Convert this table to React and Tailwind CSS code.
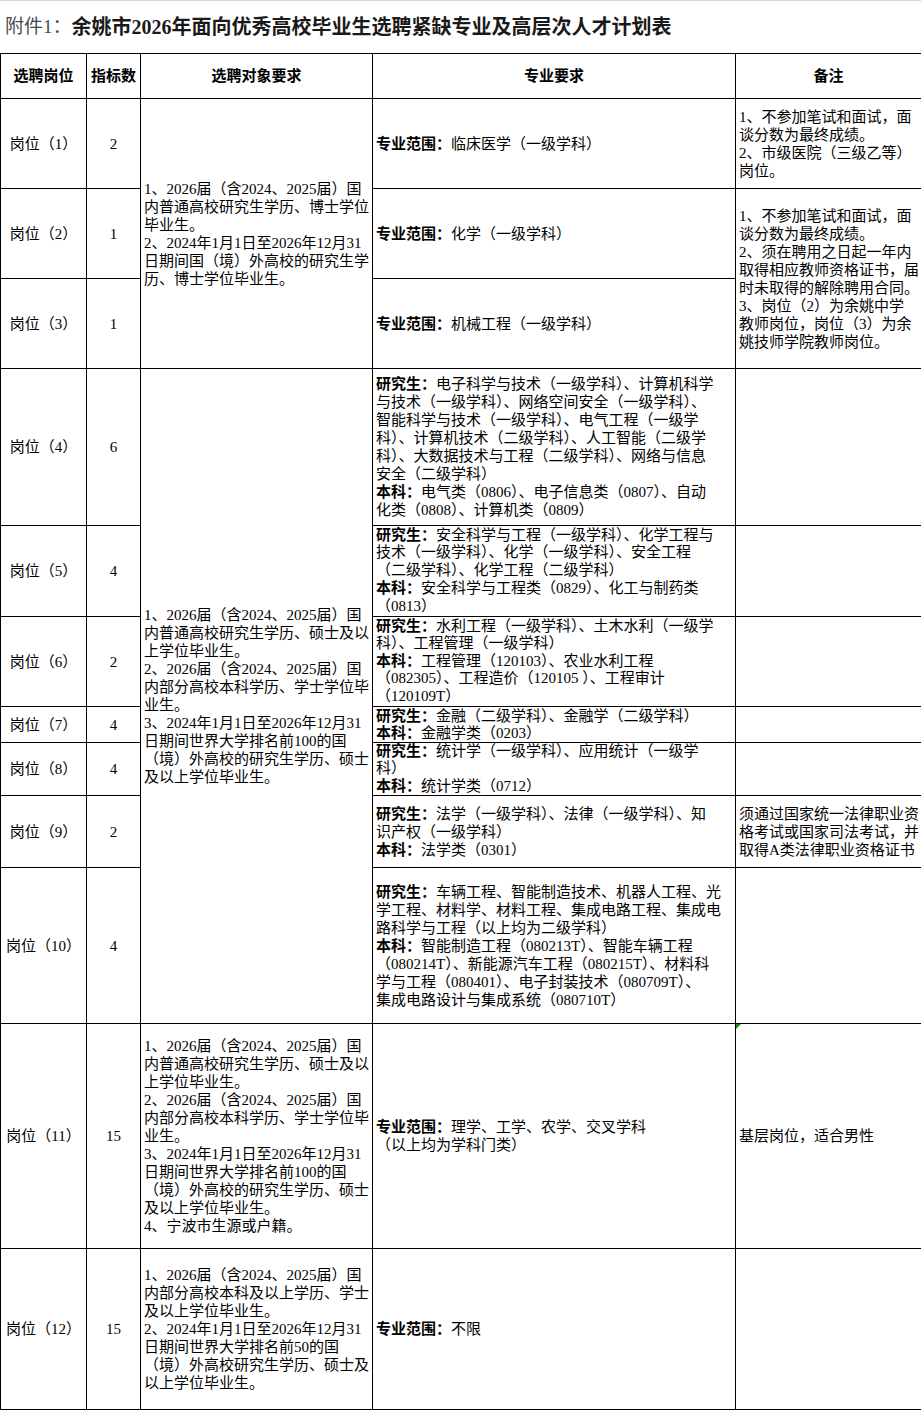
import React from "react";

const FONT = "font-['Liberation_Serif','Noto_Sans_CJK_SC',serif]";

function Lines({ lines, className = "" }) {
  return (
    <div className={"whitespace-nowrap " + className}>
      {lines.map((l, i) => (
        <div key={i}>
          {Array.isArray(l) ? (
            <>
              <span className="font-bold">{l[0]}</span>
              {l[1]}
            </>
          ) : (
            l
          )}
        </div>
      ))}
    </div>
  );
}

const td = "border border-black p-0 align-middle";
const posTd = td + " text-center whitespace-nowrap";
const txtTd = td + " px-[3px] text-left";

const col3a = [
  "1、2026届（含2024、2025届）国",
  "内普通高校研究生学历、博士学位",
  "毕业生。",
  "2、2024年1月1日至2026年12月31",
  "日期间国（境）外高校的研究生学",
  "历、博士学位毕业生。",
];

const col3b = [
  "1、2026届（含2024、2025届）国",
  "内普通高校研究生学历、硕士及以",
  "上学位毕业生。",
  "2、2026届（含2024、2025届）国",
  "内部分高校本科学历、学士学位毕",
  "业生。",
  "3、2024年1月1日至2026年12月31",
  "日期间世界大学排名前100的国",
  "（境）外高校的研究生学历、硕士",
  "及以上学位毕业生。",
];

const col3c = [...col3b, "4、宁波市生源或户籍。"];

const col3d = [
  "1、2026届（含2024、2025届）国",
  "内部分高校本科及以上学历、学士",
  "及以上学位毕业生。",
  "2、2024年1月1日至2026年12月31",
  "日期间世界大学排名前50的国",
  "（境）外高校研究生学历、硕士及",
  "以上学位毕业生。",
];

export default function App() {
  return (
    <div className={"w-[921px] bg-white text-black " + FONT}>
      <div className="h-[53px] border-t border-[#d6d6d6] flex items-center pl-[5px] whitespace-nowrap">
        <span className="text-[19px] text-[#4a4a4a]">附件1：</span>
        <span className="text-[20px] font-bold text-[#1a1a1a]">
          余姚市2026年面向优秀高校毕业生选聘紧缺专业及高层次人才计划表
        </span>
      </div>
      <table className="table-fixed border-collapse w-[921px] text-[15px] leading-[18px]">
        <colgroup>
          <col className="w-[86px]" />
          <col className="w-[54px]" />
          <col className="w-[232px]" />
          <col className="w-[363px]" />
          <col className="w-[186px]" />
        </colgroup>
        <tbody>
          <tr className="h-[45px] font-bold">
            <td className={posTd}>选聘岗位</td>
            <td className={posTd}>指标数</td>
            <td className={posTd}>选聘对象要求</td>
            <td className={posTd}>专业要求</td>
            <td className={posTd}>备注</td>
          </tr>

          <tr className="h-[90px]">
            <td className={posTd}>岗位（1）</td>
            <td className={posTd}>2</td>
            <td rowSpan={3} className={txtTd}>
              <Lines lines={col3a} />
            </td>
            <td className={txtTd}>
              <Lines lines={[["专业范围：", "临床医学（一级学科）"]]} />
            </td>
            <td className={txtTd}>
              <Lines
                lines={[
                  "1、不参加笔试和面试，面",
                  "谈分数为最终成绩。",
                  "2、市级医院（三级乙等）",
                  "岗位。",
                ]}
              />
            </td>
          </tr>
          <tr className="h-[90px]">
            <td className={posTd}>岗位（2）</td>
            <td className={posTd}>1</td>
            <td className={txtTd}>
              <Lines lines={[["专业范围：", "化学（一级学科）"]]} />
            </td>
            <td rowSpan={2} className={txtTd}>
              <Lines
                lines={[
                  "1、不参加笔试和面试，面",
                  "谈分数为最终成绩。",
                  "2、须在聘用之日起一年内",
                  "取得相应教师资格证书，届",
                  "时未取得的解除聘用合同。",
                  "3、岗位（2）为余姚中学",
                  "教师岗位，岗位（3）为余",
                  "姚技师学院教师岗位。",
                ]}
              />
            </td>
          </tr>
          <tr className="h-[90px]">
            <td className={posTd}>岗位（3）</td>
            <td className={posTd}>1</td>
            <td className={txtTd}>
              <Lines lines={[["专业范围：", "机械工程（一级学科）"]]} />
            </td>
          </tr>

          <tr className="h-[157px]">
            <td className={posTd}>岗位（4）</td>
            <td className={posTd}>6</td>
            <td rowSpan={7} className={txtTd}>
              <Lines lines={col3b} />
            </td>
            <td className={txtTd}>
              <Lines
                lines={[
                  ["研究生：", "电子科学与技术（一级学科）、计算机科学"],
                  "与技术（一级学科）、网络空间安全（一级学科）、",
                  "智能科学与技术（一级学科）、电气工程（一级学",
                  "科）、计算机技术（二级学科）、人工智能（二级学",
                  "科）、大数据技术与工程（二级学科）、网络与信息",
                  "安全（二级学科）",
                  ["本科：", "电气类（0806）、电子信息类（0807）、自动"],
                  "化类（0808）、计算机类（0809）",
                ]}
              />
            </td>
            <td className={td}></td>
          </tr>
          <tr className="h-[91px]">
            <td className={posTd}>岗位（5）</td>
            <td className={posTd}>4</td>
            <td className={txtTd}>
              <Lines
                className="leading-[17.8px]"
                lines={[
                  ["研究生：", "安全科学与工程（一级学科）、化学工程与"],
                  "技术（一级学科）、化学（一级学科）、安全工程",
                  "（二级学科）、化学工程（二级学科）",
                  ["本科：", "安全科学与工程类（0829）、化工与制药类"],
                  "（0813）",
                ]}
              />
            </td>
            <td className={td}></td>
          </tr>
          <tr className="h-[90px]">
            <td className={posTd}>岗位（6）</td>
            <td className={posTd}>2</td>
            <td className={txtTd}>
              <Lines
                className="leading-[17.6px]"
                lines={[
                  ["研究生：", "水利工程（一级学科）、土木水利（一级学"],
                  "科）、工程管理（一级学科）",
                  ["本科：", "工程管理（120103）、农业水利工程"],
                  "（082305）、工程造价（120105 ）、工程审计",
                  "（120109T）",
                ]}
              />
            </td>
            <td className={td}></td>
          </tr>
          <tr className="h-[36px]">
            <td className={posTd}>岗位（7）</td>
            <td className={posTd}>4</td>
            <td className={txtTd}>
              <Lines
                className="leading-[17px]"
                lines={[
                  ["研究生：", "金融（二级学科）、金融学（二级学科）"],
                  ["本科：", "金融学类（0203）"],
                ]}
              />
            </td>
            <td className={td}></td>
          </tr>
          <tr className="h-[53px]">
            <td className={posTd}>岗位（8）</td>
            <td className={posTd}>4</td>
            <td className={txtTd}>
              <Lines
                className="leading-[17.3px]"
                lines={[
                  ["研究生：", "统计学（一级学科）、应用统计（一级学"],
                  "科）",
                  ["本科：", "统计学类（0712）"],
                ]}
              />
            </td>
            <td className={td}></td>
          </tr>
          <tr className="h-[72px]">
            <td className={posTd}>岗位（9）</td>
            <td className={posTd}>2</td>
            <td className={txtTd}>
              <Lines
                lines={[
                  ["研究生：", "法学（一级学科）、法律（一级学科）、知"],
                  "识产权（一级学科）",
                  ["本科：", "法学类（0301）"],
                ]}
              />
            </td>
            <td className={txtTd}>
              <Lines
                lines={[
                  "须通过国家统一法律职业资",
                  "格考试或国家司法考试，并",
                  "取得A类法律职业资格证书",
                ]}
              />
            </td>
          </tr>
          <tr className="h-[156px]">
            <td className={posTd}>岗位（10）</td>
            <td className={posTd}>4</td>
            <td className={txtTd}>
              <Lines
                lines={[
                  ["研究生：", "车辆工程、智能制造技术、机器人工程、光"],
                  "学工程、材料学、材料工程、集成电路工程、集成电",
                  "路科学与工程（以上均为二级学科）",
                  ["本科：", "智能制造工程（080213T）、智能车辆工程"],
                  "（080214T）、新能源汽车工程（080215T）、材料科",
                  "学与工程（080401）、电子封装技术（080709T）、",
                  "集成电路设计与集成系统（080710T）",
                ]}
              />
            </td>
            <td className={td}></td>
          </tr>

          <tr className="h-[225px]">
            <td className={posTd}>岗位（11）</td>
            <td className={posTd}>15</td>
            <td className={txtTd}>
              <Lines lines={col3c} />
            </td>
            <td className={txtTd}>
              <Lines
                lines={[
                  ["专业范围：", "理学、工学、农学、交叉学科"],
                  "（以上均为学科门类）",
                ]}
              />
            </td>
            <td className={txtTd + " relative"}>
              <span className="absolute top-0 left-0 w-0 h-0 border-t-[5px] border-t-[#1f8a1f] border-r-[5px] border-r-transparent"></span>
              <Lines lines={["基层岗位，适合男性"]} />
            </td>
          </tr>
          <tr className="h-[161px]">
            <td className={posTd}>岗位（12）</td>
            <td className={posTd}>15</td>
            <td className={txtTd}>
              <Lines lines={col3d} />
            </td>
            <td className={txtTd}>
              <Lines lines={[["专业范围：", "不限"]]} />
            </td>
            <td className={td}></td>
          </tr>
        </tbody>
      </table>
    </div>
  );
}
